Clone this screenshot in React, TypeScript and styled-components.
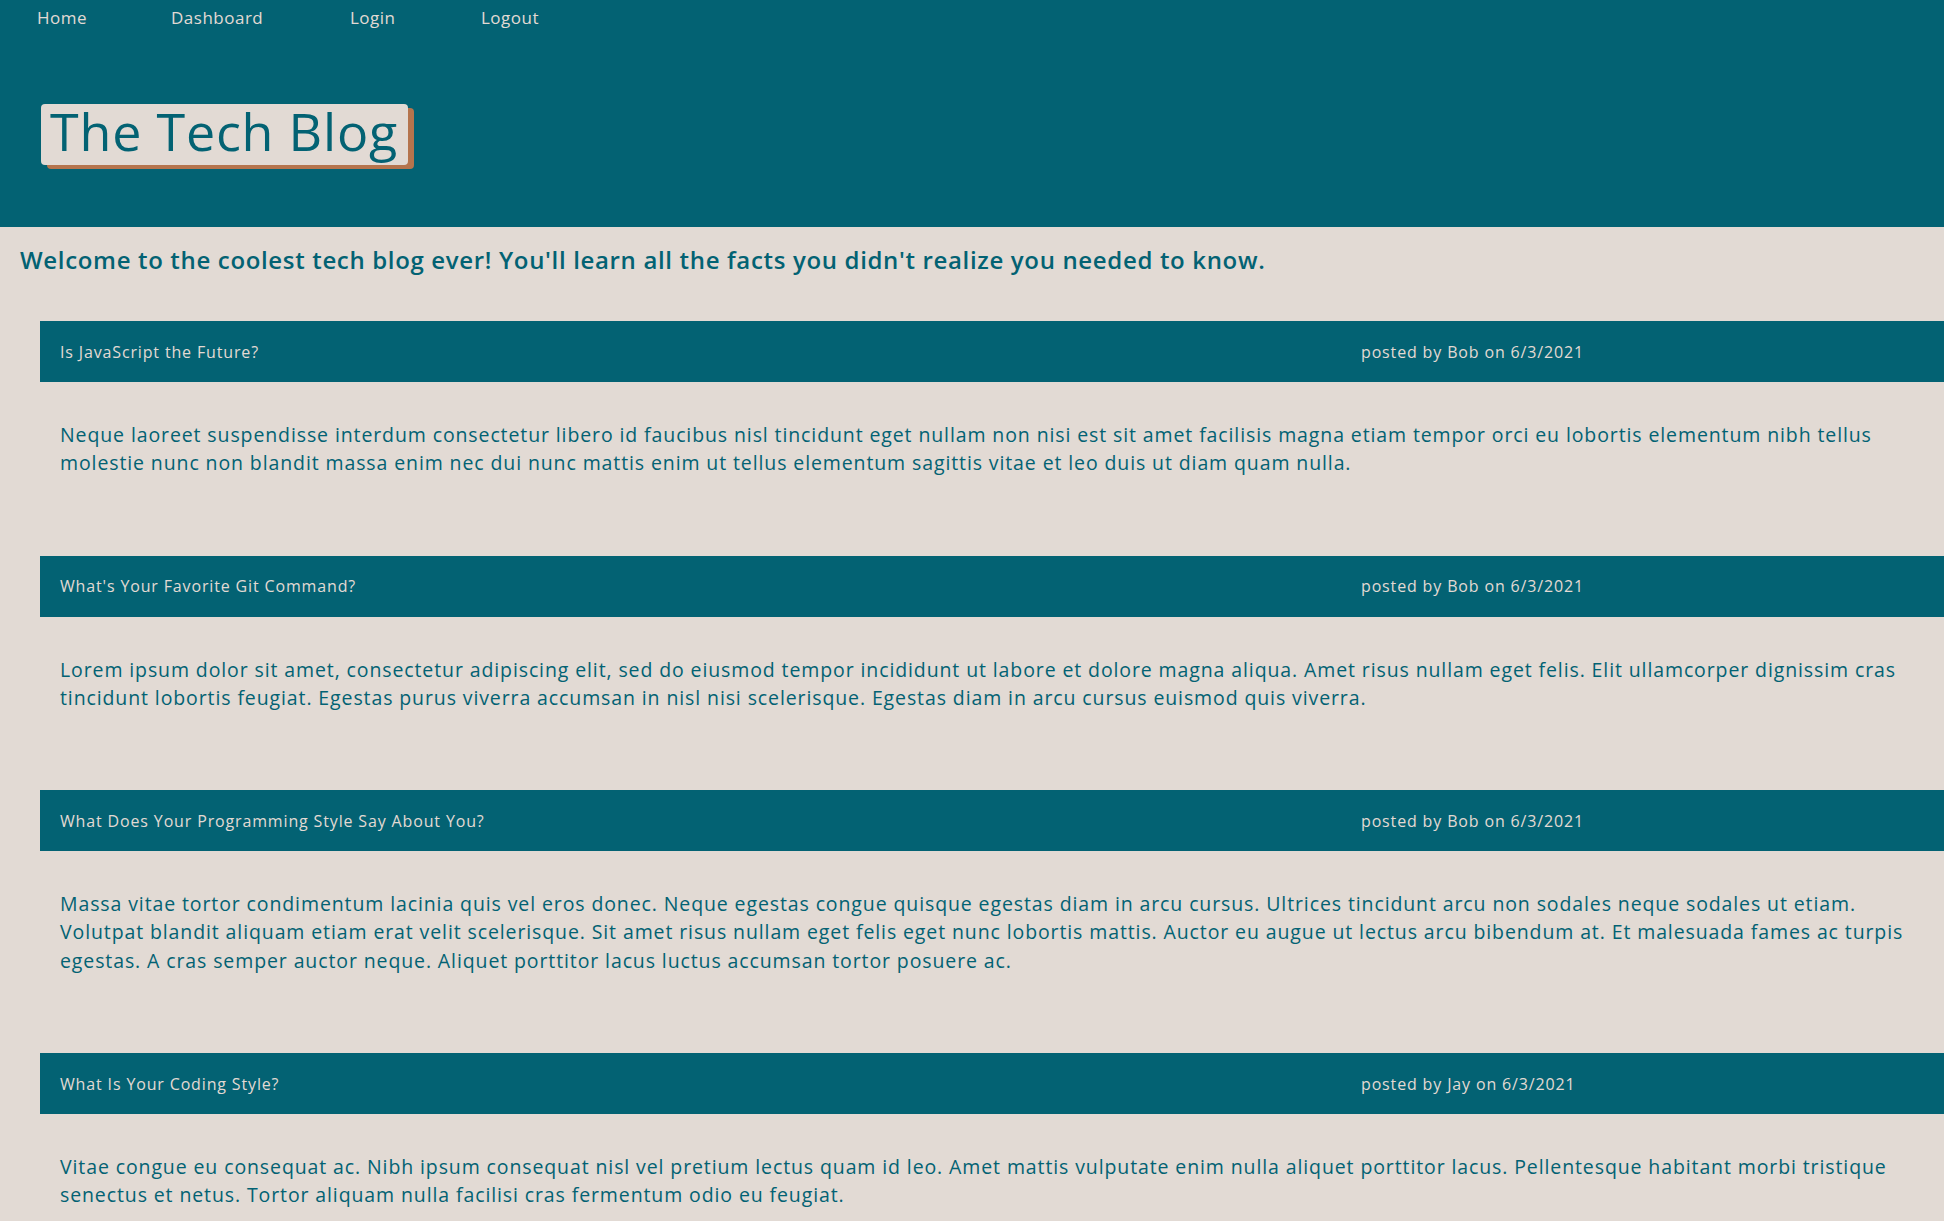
import React from "react";
import styled, { createGlobalStyle } from "styled-components";

const TEAL = "#036273";
const SAND = "#e2dad4";
const RUST = "#b5744d";

const Global = createGlobalStyle`
  html, body { margin: 0; padding: 0; }
  body {
    background: ${SAND};
    font-family: "Open Sans", "Noto Sans", sans-serif;
    color: ${TEAL};
    overflow-x: hidden;
  }
`;

const Header = styled.header`
  background: ${TEAL};
  height: 227px;
  display: flex;
  flex-direction: column;
`;

const Nav = styled.nav`
  display: flex;
  height: 34px;
  align-items: center;
  padding-left: 37px;
`;

const NavLink = styled.a<{ $w: number }>`
  width: ${(p) => p.$w}px;
  color: ${SAND};
  font-size: 17px;
  letter-spacing: 0.5px;
  text-decoration: none;
`;

const TitleRow = styled.div`
  padding: 70px 0 0 41px;
  display: flex;
`;

const Title = styled.h1`
  margin: 0;
  background: ${SAND};
  color: ${TEAL};
  border-radius: 4px;
  box-shadow: 6px 4px 0 ${RUST};
  font-size: 52px;
  font-weight: 400;
  line-height: 54px;
  height: 54px;
  padding: 0 10px 7px 9px;
  letter-spacing: 0.8px;
`;

const Welcome = styled.h2`
  margin: 0;
  padding: 18px 0 0 20px;
  height: 43px;
  line-height: 30px;
  font-size: 24px;
  font-weight: 600;
  letter-spacing: 0.66px;
  color: ${TEAL};
`;

const Feed = styled.main`
  padding-top: 33px;
  display: flex;
  flex-direction: column;
`;

const Post = styled.article`
  margin-left: 40px;
`;

const PostHead = styled.div`
  background: ${TEAL};
  height: 61px;
  display: grid;
  grid-template-columns: 1301px auto;
  align-items: center;
  padding-left: 20px;
  color: ${SAND};
  font-size: 16px;
  letter-spacing: 0.85px;
`;

const PostTitle = styled.span``;
const PostMeta = styled.span``;

const PostBody = styled.p`
  margin: 0;
  padding: 39px 24px 78px 20px;
  font-size: 19.5px;
  line-height: 28.3px;
  letter-spacing: 0.89px;
  color: ${TEAL};
`;

const posts = [
  {
    title: "Is JavaScript the Future?",
    author: "Bob",
    date: "6/3/2021",
    body:
      "Neque laoreet suspendisse interdum consectetur libero id faucibus nisl tincidunt eget nullam non nisi est sit amet facilisis magna etiam tempor orci eu lobortis elementum nibh tellus molestie nunc non blandit massa enim nec dui nunc mattis enim ut tellus elementum sagittis vitae et leo duis ut diam quam nulla.",
  },
  {
    title: "What's Your Favorite Git Command?",
    author: "Bob",
    date: "6/3/2021",
    body:
      "Lorem ipsum dolor sit amet, consectetur adipiscing elit, sed do eiusmod tempor incididunt ut labore et dolore magna aliqua. Amet risus nullam eget felis. Elit ullamcorper dignissim cras tincidunt lobortis feugiat. Egestas purus viverra accumsan in nisl nisi scelerisque. Egestas diam in arcu cursus euismod quis viverra.",
  },
  {
    title: "What Does Your Programming Style Say About You?",
    author: "Bob",
    date: "6/3/2021",
    body:
      "Massa vitae tortor condimentum lacinia quis vel eros donec. Neque egestas congue quisque egestas diam in arcu cursus. Ultrices tincidunt arcu non sodales neque sodales ut etiam. Volutpat blandit aliquam etiam erat velit scelerisque. Sit amet risus nullam eget felis eget nunc lobortis mattis. Auctor eu augue ut lectus arcu bibendum at. Et malesuada fames ac turpis egestas. A cras semper auctor neque. Aliquet porttitor lacus luctus accumsan tortor posuere ac.",
  },
  {
    title: "What Is Your Coding Style?",
    author: "Jay",
    date: "6/3/2021",
    body:
      "Vitae congue eu consequat ac. Nibh ipsum consequat nisl vel pretium lectus quam id leo. Amet mattis vulputate enim nulla aliquet porttitor lacus. Pellentesque habitant morbi tristique senectus et netus. Tortor aliquam nulla facilisi cras fermentum odio eu feugiat.",
  },
];

export default function App() {
  return (
    <>
      <Global />
      <Header>
        <Nav>
          <NavLink $w={134} href="#">Home</NavLink>
          <NavLink $w={179} href="#">Dashboard</NavLink>
          <NavLink $w={131} href="#">Login</NavLink>
          <NavLink $w={100} href="#">Logout</NavLink>
        </Nav>
        <TitleRow>
          <Title>The Tech Blog</Title>
        </TitleRow>
      </Header>
      <Welcome>
        Welcome to the coolest tech blog ever! You'll learn all the facts you didn't realize you needed to know.
      </Welcome>
      <Feed>
        {posts.map((p) => (
          <Post key={p.title}>
            <PostHead>
              <PostTitle>{p.title}</PostTitle>
              <PostMeta>
                posted by {p.author} on {p.date}
              </PostMeta>
            </PostHead>
            <PostBody>{p.body}</PostBody>
          </Post>
        ))}
      </Feed>
    </>
  );
}
